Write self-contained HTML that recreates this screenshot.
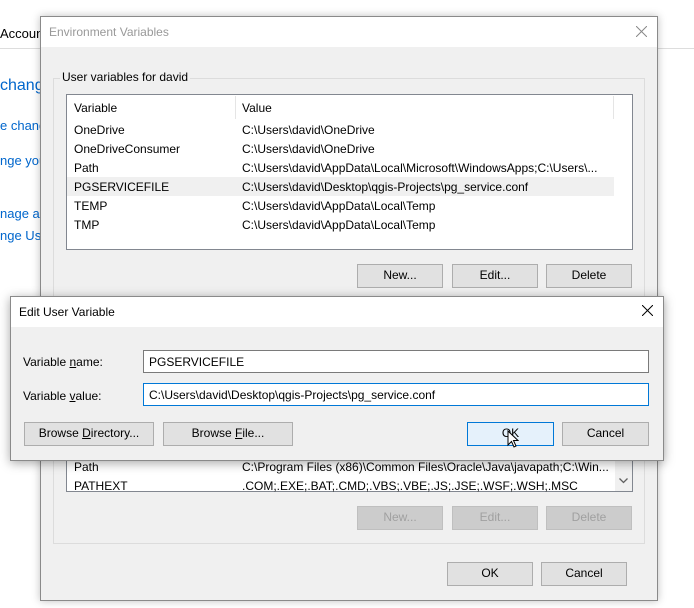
<!DOCTYPE html>
<html><head><style>
*{box-sizing:border-box;margin:0;padding:0}
body{width:694px;height:608px;background:#fff;position:relative;overflow:hidden;font-family:"Liberation Sans",sans-serif;font-size:12px;color:#000}
.a{position:absolute;white-space:nowrap}
.btn{position:absolute;background:#e1e1e1;border:1px solid #adadad;text-align:center;line-height:21px;font-size:12px}
.dis{color:#a0a0a0;background:#cccccc;border-color:#bfbfbf}
.blue{color:#0066cc;font-size:13px}
</style></head><body>
<!-- background window -->
<div class="a" style="left:0;top:26px;font-size:13px">Accoun</div>
<div class="a" style="left:0;top:48px;width:694px;height:1px;background:#ddd"></div>
<div class="a blue" style="left:0;top:77px;font-size:16px">chang</div>
<div class="a blue" style="left:0;top:118px">e chang</div>
<div class="a blue" style="left:0;top:153px">nge you</div>
<div class="a blue" style="left:0;top:206px">nage and</div>
<div class="a blue" style="left:0;top:228px">nge Use</div>

<!-- Environment Variables dialog -->
<div class="a" style="left:40px;top:16px;width:618px;height:585px;background:#f0f0f0;border:1px solid #8a8a8a;box-shadow:0 0 8px rgba(0,0,0,.25)"></div>
<div class="a" style="left:41px;top:17px;width:616px;height:30px;background:#fff"></div>
<div class="a" style="left:49px;top:25px;color:#999">Environment Variables</div>
<svg class="a" style="left:636px;top:26px" width="11" height="11"><path d="M0 0L11 11M11 0L0 11" stroke="#888" stroke-width="1"/></svg>
<div class="a" style="left:53px;top:78px;width:592px;height:466px;border:1px solid #dcdcdc"></div>
<div class="a" style="left:60px;top:70px;background:#f0f0f0;padding:0 2px">User variables for david</div>
<div class="a" style="left:66px;top:94px;width:567px;height:156px;background:#fff;border:1px solid #828790"></div>
<div class="a" style="left:235px;top:96px;width:1px;height:23px;background:#e5e5e5"></div>
<div class="a" style="left:613px;top:96px;width:1px;height:23px;background:#e5e5e5"></div>
<div class="a" style="left:67px;top:177px;width:547px;height:19px;background:#f0f0f0"></div>
<div class="a" style="left:74px;top:101px">Variable</div><div class="a" style="left:242px;top:101px">Value</div>
<div class="a" style="left:74px;top:123px">OneDrive</div><div class="a" style="left:242px;top:123px">C:\Users\david\OneDrive</div>
<div class="a" style="left:74px;top:142px">OneDriveConsumer</div><div class="a" style="left:242px;top:142px">C:\Users\david\OneDrive</div>
<div class="a" style="left:74px;top:161px">Path</div><div class="a" style="left:242px;top:161px">C:\Users\david\AppData\Local\Microsoft\WindowsApps;C:\Users\...</div>
<div class="a" style="left:74px;top:180px">PGSERVICEFILE</div><div class="a" style="left:242px;top:180px">C:\Users\david\Desktop\qgis-Projects\pg_service.conf</div>
<div class="a" style="left:74px;top:199px">TEMP</div><div class="a" style="left:242px;top:199px">C:\Users\david\AppData\Local\Temp</div>
<div class="a" style="left:74px;top:218px">TMP</div><div class="a" style="left:242px;top:218px">C:\Users\david\AppData\Local\Temp</div>
<div class="btn" style="left:357px;top:264px;width:86px;height:24px">New...</div>
<div class="btn" style="left:452px;top:264px;width:86px;height:24px">Edit...</div>
<div class="btn" style="left:546px;top:264px;width:86px;height:24px">Delete</div>

<div class="a" style="left:66px;top:450px;width:567px;height:42px;background:#fff;border:1px solid #828790;border-top:none"></div>
<div class="a" style="left:615px;top:455px;width:17px;height:36px;background:#f0f0f0"></div>
<svg class="a" style="left:619px;top:478px" width="9" height="6"><path d="M0.5 0.5L4.5 4.5L8.5 0.5" stroke="#606060" fill="none" stroke-width="1.3"/></svg>
<div class="a" style="left:74px;top:460px">Path</div><div class="a" style="left:242px;top:460px">C:\Program Files (x86)\Common Files\Oracle\Java\javapath;C:\Win...</div>
<div class="a" style="left:74px;top:479px">PATHEXT</div><div class="a" style="left:242px;top:479px">.COM;.EXE;.BAT;.CMD;.VBS;.VBE;.JS;.JSE;.WSF;.WSH;.MSC</div>
<div class="btn dis" style="left:357px;top:506px;width:86px;height:24px">New...</div>
<div class="btn dis" style="left:452px;top:506px;width:86px;height:24px">Edit...</div>
<div class="btn dis" style="left:546px;top:506px;width:86px;height:24px">Delete</div>
<div class="btn" style="left:447px;top:562px;width:86px;height:24px">OK</div>
<div class="btn" style="left:541px;top:562px;width:86px;height:24px">Cancel</div>

<!-- Edit User Variable dialog -->
<div class="a" style="left:10px;top:296px;width:654px;height:165px;background:#f0f0f0;border:1px solid #8a8a8a;box-shadow:0 2px 10px rgba(0,0,0,.35)"></div>
<div class="a" style="left:11px;top:297px;width:652px;height:30px;background:#fff"></div>
<div class="a" style="left:19px;top:305px">Edit User Variable</div>
<svg class="a" style="left:642px;top:305px" width="11" height="11"><path d="M0 0L11 11M11 0L0 11" stroke="#000" stroke-width="1"/></svg>
<div class="a" style="left:23px;top:355px">Variable <u>n</u>ame:</div>
<div class="a" style="left:23px;top:389px">Variable <u>v</u>alue:</div>
<div class="a" style="left:143px;top:350px;width:506px;height:23px;background:#fff;border:1px solid #7a7a7a;padding:4px 5px">PGSERVICEFILE</div>
<div class="a" style="left:143px;top:383px;width:506px;height:23px;background:#fff;border:1px solid #0078d7;padding:4px 5px">C:\Users\david\Desktop\qgis-Projects\pg_service.conf</div>
<div class="btn" style="left:24px;top:422px;width:130px;height:24px">Browse <u>D</u>irectory...</div>
<div class="btn" style="left:163px;top:422px;width:130px;height:24px">Browse <u>F</u>ile...</div>
<div class="btn" style="left:467px;top:422px;width:87px;height:24px;background:#e5f1fb;border-color:#0078d7">OK</div>
<div class="btn" style="left:562px;top:422px;width:87px;height:24px">Cancel</div>
<svg class="a" style="left:507px;top:430px" width="12" height="19"><path d="M1 1L1 15L4.5 11.5L7 17L9 16L6.5 10.5L11 10.5Z" fill="#fff" stroke="#000" stroke-width="1"/></svg>
</body></html>
